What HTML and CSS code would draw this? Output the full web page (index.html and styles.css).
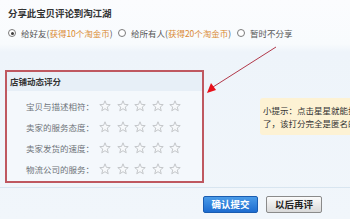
FILE: index.html
```html
<!DOCTYPE html>
<html lang="zh-CN">
<head>
<meta charset="utf-8">
<title>分享此宝贝评论到淘江湖</title>
<link rel="stylesheet" href="styles.css">
</head>
<body>
<div class="page">
  <svg class="defs" width="0" height="0" aria-hidden="true">
    <symbol id="star" viewBox="0 0 12 12">
      <polygon points="6,0.8 7.41,4.36 11.23,4.6 8.28,7.04 9.23,10.75 6,8.7 2.77,10.75 3.72,7.04 0.77,4.6 4.59,4.36" fill="#f7f9fb" stroke="#c4c7ca" stroke-width="1" stroke-linejoin="round"/>
    </symbol>
  </svg>

  <div class="top">
    <div class="title">分享此宝贝评论到淘江湖</div>
    <div class="share">
      <label class="opt opt-1"><span class="radio on"></span>给好友(<em>获得10个淘金币</em>)</label>
      <label class="opt opt-2"><span class="radio"></span>给所有人(<em>获得20个淘金币</em>)</label>
      <label class="opt"><span class="radio"></span>暂时不分享</label>
    </div>
  </div>

  <div class="middle">
    <div class="panel">
      <div class="panel-hd">店铺动态评分</div>
      <ul class="rows">
        <li class="row"><span class="label">宝贝与描述相符：</span><span class="stars"><svg class="star"><use href="#star"/></svg><svg class="star"><use href="#star"/></svg><svg class="star"><use href="#star"/></svg><svg class="star"><use href="#star"/></svg><svg class="star"><use href="#star"/></svg></span></li>
        <li class="row"><span class="label">卖家的服务态度：</span><span class="stars"><svg class="star"><use href="#star"/></svg><svg class="star"><use href="#star"/></svg><svg class="star"><use href="#star"/></svg><svg class="star"><use href="#star"/></svg><svg class="star"><use href="#star"/></svg></span></li>
        <li class="row"><span class="label">卖家发货的速度：</span><span class="stars"><svg class="star"><use href="#star"/></svg><svg class="star"><use href="#star"/></svg><svg class="star"><use href="#star"/></svg><svg class="star"><use href="#star"/></svg><svg class="star"><use href="#star"/></svg></span></li>
        <li class="row"><span class="label">物流公司的服务：</span><span class="stars"><svg class="star"><use href="#star"/></svg><svg class="star"><use href="#star"/></svg><svg class="star"><use href="#star"/></svg><svg class="star"><use href="#star"/></svg><svg class="star"><use href="#star"/></svg></span></li>
      </ul>
    </div>
    <div class="tip">小提示：点击星星就能打分了，该打分完全是匿名的</div>
  </div>

  <div class="actions">
    <button class="btn btn-primary">确认提交</button>
    <button class="btn btn-default">以后再评</button>
  </div>

  <svg class="pointer" width="350" height="219" viewBox="0 0 350 219" aria-hidden="true">
    <line x1="276" y1="47" x2="213" y2="87" stroke="#b2394a" stroke-width="1"/>
    <polygon points="207,93 211,83 216,90" fill="#e8101a"/>
  </svg>
</div>
</body>
</html>
```

FILE: styles.css
```css
html, body {
  margin: 0;
  padding: 0;
  overflow: hidden;
}

body {
  width: 350px;
  height: 219px;
  background: #f2f7fb;
  font-family: "Noto Sans CJK SC", "Noto Sans", sans-serif;
  font-size: 8.5px;
  color: #666;
}

.page {
  position: relative;
  width: 350px;
  height: 219px;
  overflow: hidden;
  background: linear-gradient(#fbfcfe 0, #f8fbfd 44px, #eef4fa 52px, #f1f6fb 100%);
}

.defs {
  position: absolute;
}

.top {
  padding: 6px 0 0 8px;
  height: 64px;
  box-sizing: border-box;
}

.title {
  font-size: 9.5px;
  font-weight: 700;
  line-height: 14px;
  color: #333;
  letter-spacing: -0.1px;
}

.share {
  display: flex;
  align-items: center;
  margin-top: 6px;
  line-height: 14px;
  white-space: nowrap;
  color: #555;
}

.opt {
  display: flex;
  align-items: center;
}

.opt-1 {
  width: 110px;
}

.opt-2 {
  width: 119px;
}

.opt em {
  font-style: normal;
  color: #d98a33;
}

.radio {
  position: relative;
  width: 6px;
  height: 6px;
  border: 1px solid #7a7a7a;
  border-radius: 50%;
  background: #fff;
  margin-right: 5px;
}

.radio.on::after {
  content: "";
  position: absolute;
  left: 1.5px;
  top: 1.5px;
  width: 3px;
  height: 3px;
  border-radius: 50%;
  background: #3c3c3c;
}

.middle {
  display: flex;
  align-items: flex-start;
  padding-left: 5px;
  margin-top: 6px;
}

.panel {
  width: 195px;
  flex: none;
  border: 2px solid #bf5860;
  background: #f4f8fc;
}

.panel-hd {
  height: 19px;
  line-height: 19px;
  padding-left: 3px;
  font-weight: 700;
  font-size: 8.5px;
  color: #333;
  background: #e7eff7;
}

.rows {
  list-style: none;
  margin: 0;
  padding: 4px 0 2px 0;
}

.row {
  display: flex;
  align-items: center;
  height: 21px;
  padding-left: 19px;
}

.label {
  width: 73px;
  white-space: nowrap;
  color: #6f747a;
}

.stars {
  display: flex;
  gap: 5.5px;
}

.star {
  width: 12px;
  height: 12px;
}

.tip {
  margin-left: 56px;
  margin-top: 28px;
  width: 104px;
  flex: none;
  padding: 6px 0 5px 3px;
  line-height: 13px;
  color: #333;
  background: #fdf2d4;
  border-radius: 3px 0 0 3px;
}

.actions {
  display: flex;
  gap: 8px;
  margin-top: 4px;
  padding: 8px 0 0 203px;
  border-top: 1px solid #d8e5f0;
}

.btn {
  height: 17px;
  padding: 0;
  font-family: "Noto Sans CJK SC", sans-serif;
  font-size: 9.5px;
  font-weight: 700;
  line-height: 15px;
  border-radius: 2px;
  cursor: pointer;
}

.btn-primary {
  width: 55px;
  color: #fff;
  border: 1px solid #1a5cb0;
  background: linear-gradient(#4a9be8, #1d6cd0);
}

.btn-default {
  width: 56px;
  color: #222;
  border: 1px solid #8a8a8a;
  background: linear-gradient(#fbfbfb, #d9d9d9);
}

.pointer {
  position: absolute;
  left: 0;
  top: 0;
  pointer-events: none;
}
```
